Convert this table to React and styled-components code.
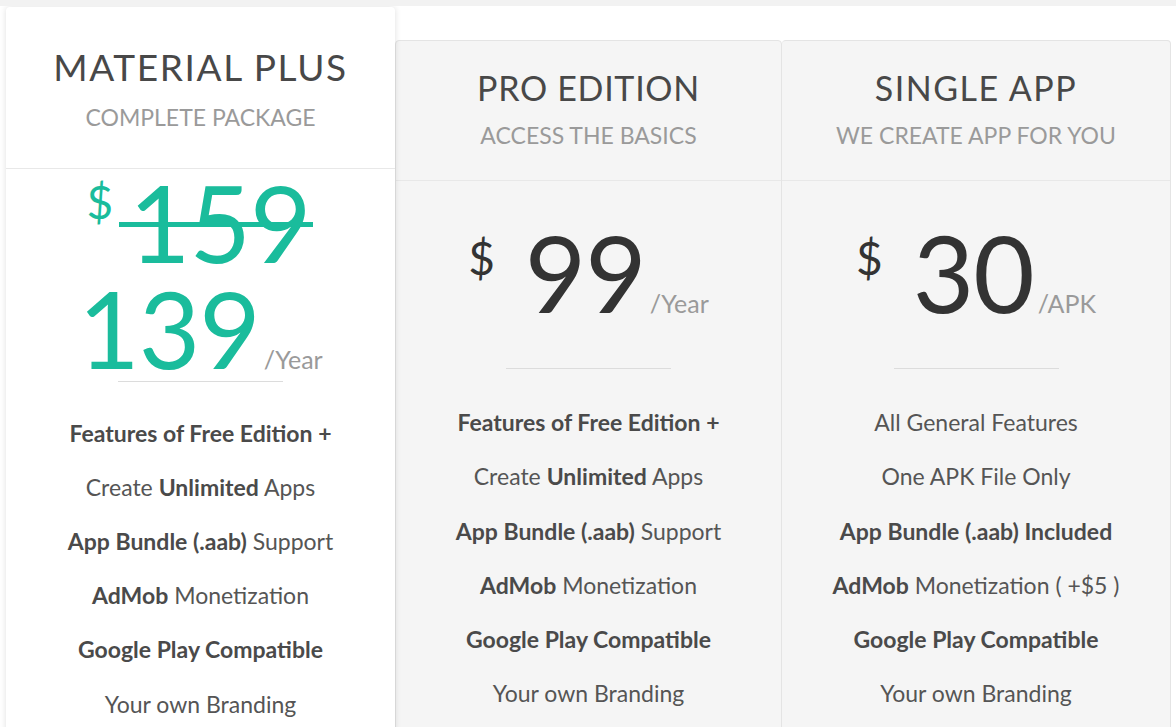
import React from "react";
import styled, { createGlobalStyle } from "styled-components";

const GlobalStyle = createGlobalStyle`
  html, body {
    margin: 0;
    padding: 0;
    background: #ffffff;
    font-family: Lato, "Open Sans", sans-serif;
    overflow: hidden;
  }
  * { box-sizing: border-box; }
`;

const TEAL = "#1abc9c";

const Page = styled.div`
  width: 1176px;
  height: 727px;
  overflow: hidden;
  border-top: 6px solid #f2f2f2;
`;

const Plans = styled.div`
  display: grid;
  grid-template-columns: 389px 387px 389px;
  align-items: start;
  padding-left: 6px;
`;

const Card = styled.section`
  position: relative;
  margin-top: ${(p) => (p.$featured ? "1px" : "34px")};
  background: ${(p) => (p.$featured ? "#ffffff" : "#f5f5f5")};
  border: ${(p) => (p.$featured ? "none" : "1px solid #e4e4e4")};
  border-left-width: ${(p) => (p.$first ? "1px" : "0")};
  border-radius: 4px;
  box-shadow: ${(p) => (p.$featured ? "0 0 6px rgba(0, 0, 0, 0.13)" : "none")};
  z-index: ${(p) => (p.$featured ? 2 : 1)};
  height: 760px;
  text-align: center;
`;

const Header = styled.header`
  padding: ${(p) => (p.$featured ? "40px 0 38px" : "28px 0 31px")};
  border-bottom: 1px solid #e8e8e8;
`;

const Title = styled.h2`
  margin: 0;
  font-family: Lato, sans-serif;
  font-weight: 400;
  font-size: ${(p) => (p.$featured ? "37px" : "34px")};
  line-height: 1.1;
  letter-spacing: ${(p) => p.$spacing}px;
  color: #484848;
`;

const Subtitle = styled.p`
  margin: 17px 0 0;
  font-size: 23px;
  line-height: 1.1;
  color: #9a9a9a;
`;

const PriceBox = styled.div`
  padding: ${(p) => (p.$featured ? "0" : "38px 0 0")};
`;

const PriceLine = styled.div`
  display: flex;
  justify-content: center;
  align-items: baseline;
  color: ${(p) => (p.$accent ? TEAL : "#333333")};
  margin-left: ${(p) => p.$shift || 0}px;
`;

const Currency = styled.span`
  align-self: flex-start;
  font-size: 46px;
  line-height: 1;
  margin-top: ${(p) => p.$top}px;
  margin-right: ${(p) => p.$gap}px;
`;

const Amount = styled.span`
  position: relative;
  font-size: 106px;
  line-height: 1;
  font-weight: 400;
  letter-spacing: -1px;

  ${(p) =>
    p.$struck &&
    `
    &::after {
      content: "";
      position: absolute;
      left: -10px;
      right: -2px;
      top: 53px;
      height: 5px;
      background: ${TEAL};
    }
  `}
`;

const Per = styled.span`
  font-size: 25px;
  color: #9a9a9a;
  margin-left: 4px;
`;

const Divider = styled.hr`
  width: 165px;
  margin: ${(p) => (p.$featured ? "0 auto" : "43px auto 0")};
  border: none;
  border-top: 1px solid #dcdcdc;
`;

const Features = styled.ul`
  list-style: none;
  margin: 0;
  padding: ${(p) => (p.$featured ? "24px 0 0" : "27px 0 0")};
`;

const Feature = styled.li`
  font-size: 23px;
  line-height: 27px;
  padding: 13.6px 0;
  color: #555555;

  b {
    font-weight: 700;
    color: #4a4a4a;
  }
`;

const plans = [
  {
    title: "MATERIAL PLUS",
    spacing: 1.6,
    subtitle: "COMPLETE PACKAGE",
    featured: true,
    features: [
      <b>Features of Free Edition +</b>,
      <>Create <b>Unlimited</b> Apps</>,
      <><b>App Bundle (.aab)</b> Support</>,
      <><b>AdMob</b> Monetization</>,
      <b>Google Play Compatible</b>,
      <>Your own Branding</>,
    ],
  },
  {
    title: "PRO EDITION",
    spacing: 0.7,
    subtitle: "ACCESS THE BASICS",
    amount: "99",
    per: "/Year",
    features: [
      <b>Features of Free Edition +</b>,
      <>Create <b>Unlimited</b> Apps</>,
      <><b>App Bundle (.aab)</b> Support</>,
      <><b>AdMob</b> Monetization</>,
      <b>Google Play Compatible</b>,
      <>Your own Branding</>,
    ],
  },
  {
    title: "SINGLE APP",
    spacing: 1.5,
    subtitle: "WE CREATE APP FOR YOU",
    amount: "30",
    per: "/APK",
    features: [
      <>All General Features</>,
      <>One APK File Only</>,
      <><b>App Bundle (.aab) Included</b></>,
      <><b>AdMob</b> Monetization ( +$5 )</>,
      <b>Google Play Compatible</b>,
      <>Your own Branding</>,
    ],
  },
];

const Price = ({ plan }) => {
  if (plan.featured) {
    return (
      <PriceBox $featured>
        <PriceLine $accent $shift={-4}>
          <Currency $top={10} $gap={16}>$</Currency>
          <Amount $struck>159</Amount>
        </PriceLine>
        <PriceLine $accent $shift={0}>
          <Amount>139</Amount>
          <Per>/Year</Per>
        </PriceLine>
      </PriceBox>
    );
  }
  return (
    <PriceBox>
      <PriceLine>
        <Currency $top={16} $gap={30}>$</Currency>
        <Amount>{plan.amount}</Amount>
        <Per>{plan.per}</Per>
      </PriceLine>
    </PriceBox>
  );
};

export default function App() {
  return (
    <Page>
      <GlobalStyle />
      <Plans>
        {plans.map((plan, i) => (
          <Card key={plan.title} $featured={plan.featured} $first={i === 1}>
            <Header $featured={plan.featured}>
              <Title $featured={plan.featured} $spacing={plan.spacing}>
                {plan.title}
              </Title>
              <Subtitle>{plan.subtitle}</Subtitle>
            </Header>
            <Price plan={plan} />
            <Divider $featured={plan.featured} />
            <Features $featured={plan.featured}>
              {plan.features.map((f, j) => (
                <Feature key={j}>{f}</Feature>
              ))}
            </Features>
          </Card>
        ))}
      </Plans>
    </Page>
  );
}
